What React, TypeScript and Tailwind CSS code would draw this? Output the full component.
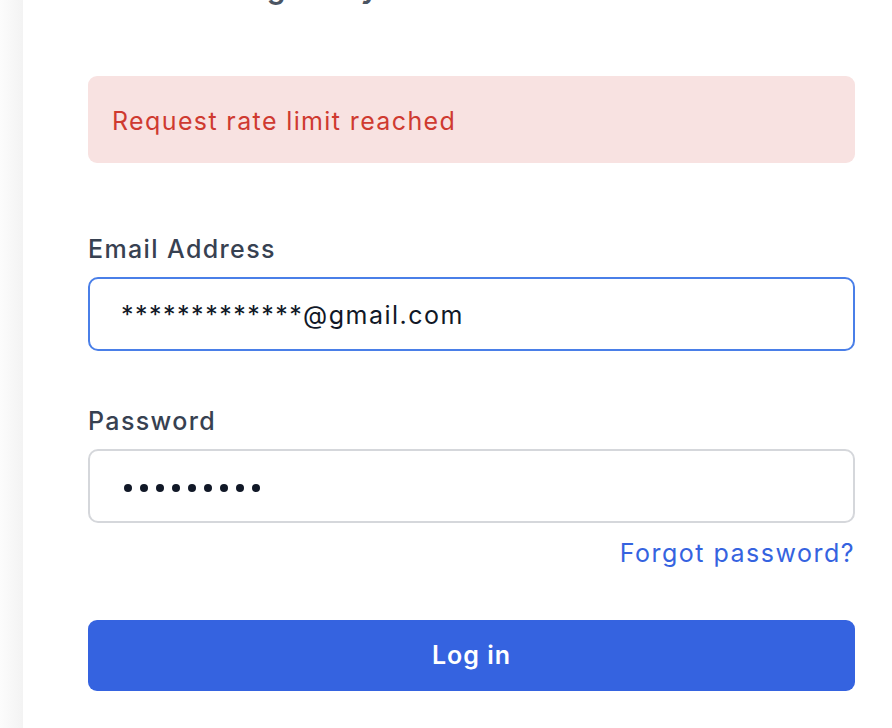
import React from 'react';

export default function App() {
  return (
    <div
      className="flex h-[728px] w-[892px] overflow-hidden bg-white"
      style={{ fontFamily: 'Inter, "Noto Sans", sans-serif' }}
    >
      {/* side gutter */}
      <div className="w-[23px] shrink-0 bg-gradient-to-r from-[#fcfcfc] to-[#f3f3f3]" />

      {/* login card */}
      <main className="flex-1 pl-[65px] pr-[37px]">
        <div className="-mt-[31px] flex flex-col">
          <h1 className="pl-[142px] text-[30px] leading-[36px] font-semibold tracking-[0.025em] text-[#4b5563]">
            Log into your account
          </h1>

          <div className="mt-[71px] rounded-[9px] bg-[#f8e2e1] pl-[24px] pt-[29px] pb-[26px] text-[25px] leading-[32px] tracking-[0.055em] text-[#cf3a30]">
            Request rate limit reached
          </div>

          <label className="mt-[70px] text-[25px] leading-[32px] font-medium tracking-[0.055em] text-[#374151]">
            Email Address
          </label>
          <div className="mt-[12px] flex h-[74px] items-center rounded-[10px] border-2 border-[#4a7fe8] pl-[31px] pt-[2px] text-[25px] leading-[32px] tracking-[0.06em] text-[#111827]">
            *************@gmail.com
          </div>

          <label className="mt-[54px] text-[25px] leading-[32px] font-medium tracking-[0.055em] text-[#374151]">
            Password
          </label>
          <div className="mt-[12px] flex h-[74px] items-center gap-[8px] rounded-[10px] border-2 border-[#d5d7db] pl-[34px] pt-[3px]">
            {[0, 1, 2, 3, 4, 5, 6, 7, 8].map((i) => (
              <span key={i} className="h-[8px] w-[8px] rounded-full bg-[#111827]" />
            ))}
          </div>

          <div className="mt-[14px] flex justify-end">
            <a className="text-[25px] leading-[32px] tracking-[0.06em] text-[#3563e0]">Forgot password?</a>
          </div>

          <button className="mt-[51px] h-[71px] rounded-[9px] bg-[#3563e0] text-[25px] font-semibold tracking-[0.04em] text-white">
            Log in
          </button>
        </div>
      </main>
    </div>
  );
}
